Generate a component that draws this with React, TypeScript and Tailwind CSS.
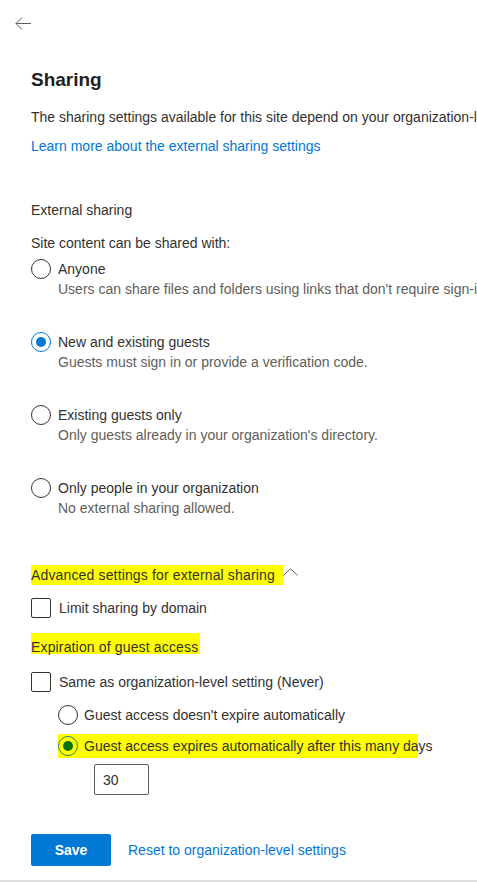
import * as React from "react";

function Radio({ checked, marked }: { checked?: boolean; marked?: boolean }) {
  if (checked) {
    return (
      <span
        className={
          marked
            ? "flex h-[20px] w-[20px] shrink-0 items-center justify-center rounded-full border border-[#2b7f6a]"
            : "flex h-[20px] w-[20px] shrink-0 items-center justify-center rounded-full border border-[#0078d4] bg-white"
        }
      >
        <span
          className={
            marked
              ? "h-[10px] w-[10px] rounded-full bg-[#0a700a]"
              : "h-[10px] w-[10px] rounded-full bg-[#0078d4]"
          }
        />
      </span>
    );
  }
  return (
    <span className="h-[20px] w-[20px] shrink-0 rounded-full border border-[#323130] bg-white" />
  );
}

function Checkbox() {
  return (
    <span className="h-[20px] w-[20px] shrink-0 rounded-[2px] border border-[#323130] bg-white" />
  );
}

function Option({
  label,
  hint,
  checked,
}: {
  label: string;
  hint: string;
  checked?: boolean;
}) {
  return (
    <div>
      <div className="flex h-[20px] items-center gap-[7px]">
        <Radio checked={checked} />
        <span className="whitespace-nowrap leading-[20px]">{label}</span>
      </div>
      <div className="whitespace-nowrap pl-[27px] leading-[20px] text-[#605e5c]">
        {hint}
      </div>
    </div>
  );
}

export default function App() {
  return (
    <div className="flex h-[882px] w-[477px] flex-col overflow-hidden bg-white font-['Liberation_Sans',Arial,sans-serif] text-[14px] text-[#323130]">
      <div className="pl-[15px] pt-[17px]">
        <svg width="16" height="13" viewBox="0 0 16 13" fill="none">
          <path
            d="M16 6.5H1.2M7 0.5L1 6.5L7 12.5"
            stroke="#605e5c"
            strokeWidth="1"
          />
        </svg>
      </div>

      <main className="flex-1 pl-[31px]">
        <h1 className="mt-[36px] text-[19px] font-bold leading-[28px] text-[#201f1e]">
          Sharing
        </h1>
        <p className="mt-[13px] whitespace-nowrap leading-[20px]">
          The sharing settings available for this site depend on your
          organization-level settings.
        </p>
        <a href="#" className="mt-[9px] block leading-[20px] text-[#0078d4]">
          Learn more about the external sharing settings
        </a>

        <div className="mt-[44px] leading-[20px]">External sharing</div>
        <div className="mt-[13px] leading-[20px]">
          Site content can be shared with:
        </div>

        <div className="mt-[6px] flex flex-col gap-[33px]">
          <Option
            label="Anyone"
            hint="Users can share files and folders using links that don't require sign-in."
          />
          <Option
            label="New and existing guests"
            hint="Guests must sign in or provide a verification code."
            checked
          />
          <Option
            label="Existing guests only"
            hint="Only guests already in your organization's directory."
          />
          <Option
            label="Only people in your organization"
            hint="No external sharing allowed."
          />
        </div>

        <div className="mt-[46px] flex h-[22px] items-center">
          <span className="flex h-[20px] items-center bg-[#ffff00] pr-[8px] leading-[20px] tracking-[0.15px]">
            Advanced settings for external sharing
          </span>
          <svg
            width="15"
            height="8"
            viewBox="0 0 15 8"
            fill="none"
            className="mb-[7px]"
          >
            <path d="M0.5 7.5L7.5 0.7L14.5 7.5" stroke="#605e5c" />
          </svg>
        </div>

        <div className="mt-[12px] flex h-[20px] items-center gap-[8px]">
          <Checkbox />
          <span className="leading-[20px]">Limit sharing by domain</span>
        </div>

        <div className="mt-[15px] h-[21px] w-fit bg-[#ffff00] pr-[2px] pt-[7px] leading-[14px] tracking-[0.15px]">
          Expiration of guest access
        </div>

        <div className="mt-[18px] flex h-[20px] items-center gap-[8px]">
          <Checkbox />
          <span className="leading-[20px]">
            Same as organization-level setting (Never)
          </span>
        </div>

        <div className="mt-[13px] flex h-[20px] items-center gap-[6px] pl-[27px]">
          <Radio />
          <span className="leading-[20px]">
            Guest access doesn't expire automatically
          </span>
        </div>

        <div className="ml-[27px] mt-[9px] flex h-[24px] w-[360px] items-center gap-[6px] bg-[#ffff00]">
          <Radio checked marked />
          <span className="whitespace-nowrap leading-[20px]">
            Guest access expires automatically after this many days
          </span>
        </div>

        <input
          readOnly
          value="30"
          className="ml-[63px] mt-[6px] block h-[31px] w-[55px] rounded-[2px] border border-[#605e5c] pl-[8px] text-[14px] text-[#323130] outline-none"
        />

        <div className="mt-[39px] flex items-center gap-[17px]">
          <button className="h-[32px] w-[80px] rounded-[2px] bg-[#0078d4] text-[14px] font-bold text-white">
            Save
          </button>
          <a href="#" className="leading-[20px] text-[#0078d4]">
            Reset to organization-level settings
          </a>
        </div>
      </main>

      <div className="h-[2px] bg-[#e1dfdd]" />
    </div>
  );
}
